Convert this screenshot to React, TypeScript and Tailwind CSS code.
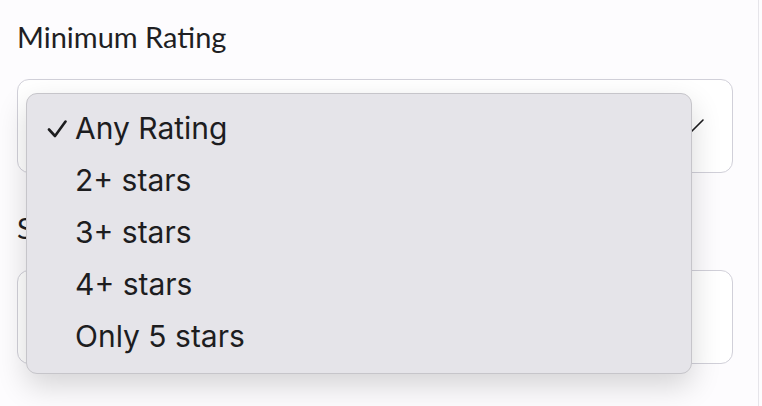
import React from 'react';

const options = ['Any Rating', '2+ stars', '3+ stars', '4+ stars', 'Only 5 stars'];

function Chevron() {
  return (
    <svg width="28" height="16" viewBox="0 0 28 16" fill="none" className="shrink-0">
      <path d="M2 2 L14 14 L26 2" stroke="#1c1c1e" strokeWidth="1.6" strokeLinecap="round" strokeLinejoin="round" />
    </svg>
  );
}

function Field({ label, value, chevron }: { label: string; value: string; chevron?: boolean }) {
  return (
    <div className="flex flex-col">
      <label className="h-[32px] text-[29px] leading-[32px] text-[#1f1f23]" style={{ fontFamily: 'Lato, "Noto Sans", sans-serif' }}>
        {label}
      </label>
      <div className="mt-[26px] h-[94px] rounded-[12px] border-[1.5px] border-[#d1d0d9] bg-white flex items-center justify-between pl-[20px] pr-[27px]">
        <span className="text-[22px] text-[#1c1c1e]">{value}</span>
        {chevron && <Chevron />}
      </div>
    </div>
  );
}

export default function App() {
  return (
    <div className="w-[762px] h-[406px] bg-[#fdfcfe] flex overflow-hidden" style={{ fontFamily: 'Inter, "Liberation Sans", sans-serif' }}>
      <div className="relative w-[759px] h-full border-r border-[#e6e5ea] pl-[17px] pr-[25px] pt-[21px] flex flex-col gap-[39px]">
        <Field label="Minimum Rating" value="Any Rating" chevron />
        <Field label="Sort By" value="Most Relevant" />

        <div className="absolute left-[26px] top-[93px] w-[666px] h-[281px] rounded-[11px] border border-[#c6c5ca] bg-[#e5e4e9] pt-[8px] shadow-[0_12px_30px_rgba(0,0,0,0.16)]">
          {options.map((o, i) => (
            <div key={o} className="relative h-[52px] flex items-center pl-[48px] text-[30px] text-[#1d1d1f]">
              {i === 0 && (
                <svg width="20" height="20" viewBox="0 0 20 20" className="absolute left-[20px] top-[17px]" fill="none">
                  <path d="M2 10.5 L8 17 L18.5 2.5" stroke="#1d1d1f" strokeWidth="2.6" strokeLinecap="round" strokeLinejoin="round" />
                </svg>
              )}
              {o}
            </div>
          ))}
        </div>
      </div>
    </div>
  );
}
